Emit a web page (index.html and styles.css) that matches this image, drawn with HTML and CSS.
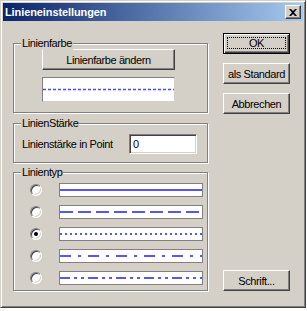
FILE: index.html
```html
<!DOCTYPE html>
<html>
<head>
	<meta charset="UTF-8">
	<title>Linieneinstellungen</title>
	<link rel="stylesheet" href="styles.css">
</head>
<body>
	<div class="window">
		<div class="titlebar">
			<span class="caption">Linieneinstellungen</span>
			<span class="close">
				<svg width="8" height="7" viewBox="0 0 8 7"><path d="M0 0h2l2 2 2-2h2L5 3.5 8 7H6L4 5 2 7H0l3-3.5z" fill="#000"/></svg>
			</span>
		</div>

		<div class="content">
			<div class="left">
				<div class="group group-color">
					<span class="group-title">Linienfarbe</span>
					<button class="btn btn-wide">Linienfarbe ändern</button>
					<div class="swatch">
						<svg width="131" height="23"><line x1="0" y1="11.5" x2="131" y2="11.5" stroke="#4a4aff" stroke-width="1.4" stroke-dasharray="3 2"/></svg>
					</div>
				</div>

				<div class="group group-width">
					<span class="group-title">LinienStärke</span>
					<span class="label">Linienstärke in Point</span>
					<div class="field">0</div>
				</div>

				<div class="group group-type">
					<span class="group-title">Linientyp</span>
					<div class="row">
						<span class="radio"></span>
						<span class="sample"><svg width="142" height="12"><line x1="0" y1="6" x2="142" y2="6" stroke="#5656f6" stroke-width="2"/></svg></span>
					</div>
					<div class="row">
						<span class="radio"></span>
						<span class="sample"><svg width="142" height="12"><line x1="0" y1="6" x2="142" y2="6" stroke="#5656f6" stroke-width="2" stroke-dasharray="13 5"/></svg></span>
					</div>
					<div class="row">
						<span class="radio checked"></span>
						<span class="sample"><svg width="142" height="12"><line x1="0" y1="6" x2="142" y2="6" stroke="#5656f6" stroke-width="2" stroke-dasharray="2 3"/></svg></span>
					</div>
					<div class="row">
						<span class="radio"></span>
						<span class="sample"><svg width="142" height="12"><line x1="0" y1="6" x2="142" y2="6" stroke="#5656f6" stroke-width="2" stroke-dasharray="11 7 3 7"/></svg></span>
					</div>
					<div class="row">
						<span class="radio"></span>
						<span class="sample"><svg width="142" height="12"><line x1="0" y1="6" x2="142" y2="6" stroke="#5656f6" stroke-width="2" stroke-dasharray="10 4 3 4 3 4"/></svg></span>
					</div>
				</div>
			</div>

			<div class="right">
				<button class="btn btn-side btn-default"><span class="focus">OK</span></button>
				<button class="btn btn-side">als Standard</button>
				<button class="btn btn-side">Abbrechen</button>
				<button class="btn btn-side btn-font">Schrift...</button>
			</div>
		</div>
	</div>
</body>
</html>
```

FILE: styles.css
```css
*
{
	margin: 0;
	padding: 0;
	box-sizing: border-box;
}
body
{
	background: #ffffff;
	font-family: "Liberation Sans", Arial, sans-serif;
	font-size: 11px;
	letter-spacing: -0.4px;
	color: #000000;
}
.window
{
	width: 306px;
	height: 308px;
	background: #d4d0c8;
	border: 1px solid;
	border-color: #d4d0c8 #404040 #404040 #d4d0c8;
	box-shadow: inset 1px 1px 0 #ffffff, inset -1px -1px 0 #808080;
	padding: 2px;
	display: flex;
	flex-direction: column;
}
.titlebar
{
	height: 18px;
	flex-shrink: 0;
	background: linear-gradient(to right, #0a246a, #a6caf0);
	display: flex;
	align-items: center;
	justify-content: space-between;
	padding: 0 2px 0 2px;
}
.caption
{
	color: #ffffff;
	font-weight: bold;
	font-size: 11px;
	letter-spacing: -0.1px;
}
.close
{
	width: 16px;
	height: 14px;
	background: #d4d0c8;
	border: 1px solid;
	border-color: #ffffff #404040 #404040 #ffffff;
	box-shadow: inset -1px -1px 0 #808080;
	display: flex;
	align-items: center;
	justify-content: center;
}
.content
{
	flex: 1;
	display: flex;
	padding: 0 0 21px 10px;
}
.left
{
	width: 195px;
	padding-top: 22px;
	display: flex;
	flex-direction: column;
	gap: 10px;
}
.right
{
	width: 67px;
	margin-left: 15px;
	padding-top: 12px;
	display: flex;
	flex-direction: column;
}

/* group boxes */
.group
{
	position: relative;
	border: 1px solid #808080;
	box-shadow: 1px 1px 0 #ffffff, inset 1px 1px 0 #ffffff;
}
.group-title
{
	position: absolute;
	top: -7px;
	left: 7px;
	padding: 0 1px;
	line-height: 13px;
	background: #d4d0c8;
}
.group-color
{
	height: 70px;
	padding: 5px 0 0 28px;
}
.group-width
{
	height: 40px;
	display: flex;
	align-items: center;
	padding: 1px 10px 0 8px;
}
.group-type
{
	height: 119px;
	margin-top: -1px;
	padding: 10px 0 0 16px;
	display: flex;
	flex-direction: column;
	gap: 8px;
}

/* buttons */
.btn
{
	display: block;
	height: 21px;
	font-family: "Liberation Sans", Arial, sans-serif;
	font-size: 11px;
	letter-spacing: -0.4px;
	color: #000000;
	background: #d4d0c8;
	border: 1px solid;
	border-color: #ffffff #404040 #404040 #ffffff;
	box-shadow: inset -1px -1px 0 #808080;
}
.btn-wide
{
	width: 133px;
}
.btn-side
{
	width: 67px;
	margin-bottom: 9px;
}
.btn-default
{
	border: 1px solid #000000;
	box-shadow: inset 1px 1px 0 #ffffff, inset -1px -1px 0 #404040, inset -2px -2px 0 #808080;
	padding: 3px 3px 4px 3px;
}
.focus
{
	display: flex;
	align-items: center;
	justify-content: center;
	height: 100%;
	border: 1px dotted #000000;
}
.btn-font
{
	margin-top: auto;
	margin-bottom: 0;
}

.swatch
{
	width: 133px;
	height: 25px;
	margin-top: 7px;
	background: #ffffff;
	border: 1px solid;
	border-color: #808080 #d4d0c8 #d4d0c8 #808080;
}
.swatch svg
{
	display: block;
}

.label
{
	flex: 1;
}
.field
{
	width: 68px;
	height: 20px;
	background: #ffffff;
	border: 1px solid;
	border-color: #808080 #ffffff #ffffff #808080;
	box-shadow: inset 1px 1px 0 #404040, inset -1px -1px 0 #d4d0c8;
	padding: 2px 3px;
	line-height: 14px;
}

/* line types */
.row
{
	display: flex;
	align-items: center;
	height: 14px;
}
.radio
{
	width: 12px;
	height: 12px;
	border-radius: 50%;
	background: #ffffff;
	border: 1px solid;
	border-color: #808080 #ffffff #ffffff #808080;
	box-shadow: inset 1px 1px 0 #404040, inset -1px -1px 0 #d4d0c8;
	display: flex;
	align-items: center;
	justify-content: center;
}
.radio.checked::after
{
	content: "";
	width: 4px;
	height: 4px;
	border-radius: 50%;
	background: #000000;
}
.sample
{
	width: 144px;
	height: 14px;
	margin-left: 17px;
	background: #ffffff;
	border: 1px solid #808080;
}
.sample svg
{
	display: block;
}
```
